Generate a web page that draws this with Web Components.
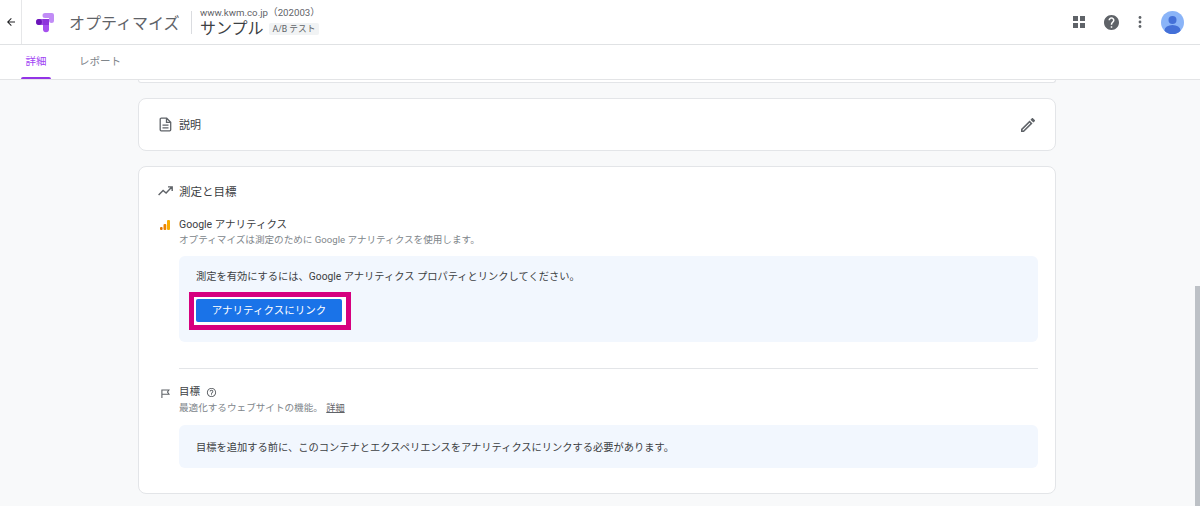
<!DOCTYPE html>
<html lang="ja"><head><meta charset="utf-8">
<style>
html,body{margin:0;height:506px;overflow:hidden;background:#f8f9fa;font-family:Roboto,"Noto Sans CJK JP",sans-serif;color:#3c4043}
</style></head><body>
<opt-app>
<opt-header></opt-header>
<opt-tabs></opt-tabs>
<opt-main>
  <opt-card class="stub"></opt-card>
  <opt-desc-card></opt-desc-card>
  <opt-card class="big">
    <opt-measure></opt-measure>
  </opt-card>
</opt-main>
</opt-app>
<script>
function def(name,html){customElements.define(name,class extends HTMLElement{constructor(){super();this.attachShadow({mode:'open'}).innerHTML=html}})}
def('opt-app',`<style>:host{display:flex;flex-direction:column;height:506px;position:relative;overflow:hidden}
.sb{position:absolute;right:0;top:286px;width:5px;height:220px;background:#bdc1c6}</style><slot></slot><div class="sb"></div>`);
def('opt-header',`<style>:host{display:flex;align-items:center;height:44px;background:#fff;border-bottom:1px solid #e0e2e4;flex:none}
.back{width:21px;height:44px;display:flex;align-items:center;justify-content:center;border-right:1px solid #e6e7e9;flex:none}
.logo{margin-left:14px;width:19px;height:21px;flex:none}
.pn{margin-left:14px;font-size:16px;color:#5f6368;white-space:nowrap;width:122px}
.sep{width:1px;height:23px;background:#dadce0;flex:none}
.ctx{margin-left:8px;display:flex;flex-direction:column;line-height:1}
.acct{font-size:9.7px;color:#5f6368;line-height:12px;white-space:nowrap;margin-top:1px}
.nm{display:flex;align-items:center;font-size:16px;color:#3c4043;line-height:19px;white-space:nowrap}
.chip{margin-left:5px;font-size:8.7px;line-height:12px;background:#f1f3f4;color:#5f6368;padding:0 4px;height:12px;border-radius:2px}
.sp{flex:1}
.ic{flex:none;display:block}
</style>
<div class="back"><svg class="ic" width="12" height="12" viewBox="0 0 24 24"><path fill="#202124" d="M20 11H7.830l5.590-5.590L12 4l-8 8 8 8 1.410-1.410L7.830 13H20z"/></svg></div>
<svg class="logo" viewBox="36 12 19 21"><path fill="#c18cf6" d="M45 13h7a2 2 0 0 1 2 2v5.500a2.500 2.500 0 0 1-5 0V18h-4a2.500 2.500 0 0 1 0-5z"/><path fill="#a650ee" d="M43 19h6v10.200a3 3 0 0 1-6 0z"/><path fill="#8a2fd8" d="M39 19h10v6H39a3 3 0 0 1 0-6z" opacity=".85"/><circle cx="39" cy="22" r="2.900" fill="#6a14b8"/></svg>
<div class="pn">オプティマイズ</div><div class="sep"></div>
<div class="ctx"><div class="acct">www.kwm.co.jp（202003）</div><div class="nm">サンプル<span class="chip">A/B テスト</span></div></div>
<div class="sp"></div>
<svg class="ic" style="margin-right:19px" width="12" height="12" viewBox="0 0 12 12" fill="#5f6368"><rect x="0" y="0" width="5" height="5"/><rect x="7" y="0" width="5" height="5"/><rect x="0" y="7" width="5" height="5"/><rect x="7" y="7" width="5" height="5"/></svg>
<svg class="ic" style="margin-right:19px" width="15" height="15" viewBox="2 2 20 20"><path fill="#5f6368" d="M12 2C6.480 2 2 6.480 2 12s4.480 10 10 10 10-4.480 10-10S17.520 2 12 2zm1 17h-2v-2h2v2zm2.070-7.750l-.9.920C13.450 12.900 13 13.500 13 15h-2v-.5c0-1.100.450-2.100 1.170-2.830l1.240-1.260c.370-.360.590-.860.590-1.410 0-1.100-.9-2-2-2s-2 .9-2 2H8c0-2.210 1.790-4 4-4s4 1.790 4 4c0 .880-.360 1.680-.930 2.250z"/></svg>
<svg class="ic" style="margin-right:19px" width="4" height="12" viewBox="0 0 4 12" fill="#5f6368"><circle cx="2" cy="1.500" r="1.400"/><circle cx="2" cy="6" r="1.400"/><circle cx="2" cy="10.500" r="1.400"/></svg>
<svg class="ic" style="margin-right:16px" width="23" height="23" viewBox="0 0 23 23"><defs><clipPath id="c"><circle cx="11.500" cy="11.500" r="11.500"/></clipPath></defs><circle cx="11.500" cy="11.500" r="11.500" fill="#8ab4f8"/><g clip-path="url(#c)" fill="#4470d8"><circle cx="11.500" cy="9" r="4"/><ellipse cx="11.500" cy="19.500" rx="8" ry="5.500"/></g></svg>`);
def('opt-tabs',`<style>:host{display:flex;height:34px;background:#fff;flex:none;border-bottom:1px solid #e3e4e6;font-size:10.5px;padding-left:21px}
.t{position:relative;height:34px;display:flex;align-items:center;justify-content:center;color:#80868b;margin-right:28px;padding-bottom:3px;box-sizing:border-box}
.a{color:#a142f4;width:30px}
.a::after{content:"";position:absolute;left:0;right:0;bottom:0;height:2px;background:#9334e6;border-radius:2px 2px 0 0}
</style><div class="t a">詳細</div><div class="t">レポート</div>`);
def('opt-main',`<style>:host{display:flex;flex-direction:column;gap:15px;width:918px;margin-left:138px;flex:none}</style><slot></slot>`);
def('opt-card',`<style>:host{display:block;box-sizing:border-box;background:#fff;border:1px solid #e3e5e8;border-radius:8px}
:host(.stub){height:3px;border-top:0;border-radius:0 0 6px 6px}
:host(.big){height:328px;padding:0 17px 0 40px}
</style><slot></slot>`);
def('opt-desc-card',`<style>:host{display:flex;align-items:center;box-sizing:border-box;height:53px;background:#fff;border:1px solid #e3e5e8;border-radius:8px;padding:0 20px 0 20px;font-size:11px;color:#3c4043}
span{margin-left:7px;flex:1;margin-top:-1px}</style>
<svg width="13" height="15" viewBox="0 0 13 15" fill="none" stroke="#5f6368" stroke-width="1.300"><path d="M1.200 2.200a1 1 0 0 1 1-1h5.500l4 4v7.600a1 1 0 0 1-1 1H2.200a1 1 0 0 1-1-1zM7.500 1.200v4.200h4.200M3.500 8.200h6M3.500 10.800h6"/></svg>
<span>説明</span>
<svg width="14" height="14" viewBox="3 3 18 18"><path fill="#5f6368" d="M14.060 9.020l.920.920L5.920 19H5v-.920l9.060-9.060M17.660 3c-.250 0-.510.100-.7.290l-1.830 1.830 3.750 3.750 1.830-1.830c.390-.390.390-1.020 0-1.410l-2.340-2.340c-.2-.2-.450-.29-.71-.29zm-3.600 3.190L3 17.250V21h3.750L17.810 9.940l-3.750-3.750z"/></svg>`);
def('opt-measure',`<style>:host{display:block;position:relative;font-size:10px;color:#3c4043}
.h{display:flex;align-items:center;height:15px;margin-top:16px;font-size:11.5px;position:relative}
.ic{position:absolute;left:-21px}
.row{position:relative}
.r1{margin-top:19px}
.l{font-size:10.5px;line-height:16px;height:16px;display:flex;align-items:center}
.s{font-size:9.6px;line-height:14px;height:14px;color:#80868b}
.s u{color:#5f6368;margin-left:1px;font-size:9.2px}
.box{background:#f2f7fe;border-radius:6px;padding:0 17px;font-size:10.25px;color:#3c4043}
.b1{height:86px;margin-top:9px;padding-top:13px;box-sizing:border-box;line-height:16px}
.frame{display:block;width:162px;height:38px;box-sizing:border-box;border:5px solid #d6007f;padding:2px 4px 3px 2px;margin:7px 0 0 -7px;background:#fff}
.btn{display:flex;align-items:center;justify-content:center;height:100%;background:#1a73e8;border-radius:2px;color:#fff;font-size:10.5px}
.hr{height:1px;background:#e3e5e8;margin-top:26px}
.r2{margin-top:15px}
.r2 .s{margin-top:1px}
.l svg{margin-left:6px}
.b2{height:43px;margin-top:10px;display:flex;align-items:center}
</style>
<div class="h"><svg class="ic" width="15" height="10" viewBox="0 0 15 10" fill="none" stroke="#5f6368" stroke-width="1.400"><path d="M.6 9l4.500-4.500 3 2.500 5.700-6M10 .9h4.200v4"/></svg>測定と目標</div>
<div class="row r1"><svg class="ic" style="top:3px;left:-19px" width="10" height="10" viewBox="0 0 10 10"><rect x="0" y="7" width="2.600" height="3" rx="1" fill="#e37400"/><rect x="3.500" y="4" width="2.800" height="6" rx="1" fill="#ec8400"/><rect x="7" y="0" width="3" height="10" rx="1" fill="#f9ab00"/></svg>
<div class="l">Google アナリティクス</div><div class="s">オプティマイズは測定のために Google アナリティクスを使用します。</div></div>
<div class="box b1">測定を有効にするには、Google アナリティクス プロパティとリンクしてください。<div class="frame"><div class="btn">アナリティクスにリンク</div></div></div>
<div class="hr"></div>
<div class="row r2"><svg class="ic" style="top:5px;left:-18px" width="9" height="9" viewBox="0 0 9 9" fill="none" stroke="#5f6368" stroke-width="1.100"><path d="M.9 9V1h7L6.500 3 8 5.200H.9"/></svg>
<div class="l">目標<svg width="11" height="11" viewBox="0 0 24 24"><path fill="#5f6368" d="M11 18h2v-2h-2v2zm1-16C6.480 2 2 6.480 2 12s4.480 10 10 10 10-4.480 10-10S17.520 2 12 2zm0 18c-4.410 0-8-3.590-8-8s3.590-8 8-8 8 3.590 8 8-3.590 8-8 8zm0-14c-2.210 0-4 1.790-4 4h2c0-1.100.9-2 2-2s2 .9 2 2c0 2-3 1.750-3 5h2c0-2.250 3-2.500 3-5 0-2.210-1.790-4-4-4z"/></svg></div>
<div class="s">最適化するウェブサイトの機能。 <u>詳細</u></div></div>
<div class="box b2">目標を追加する前に、このコンテナとエクスペリエンスをアナリティクスにリンクする必要があります。</div>`);
</script>
</body></html>
